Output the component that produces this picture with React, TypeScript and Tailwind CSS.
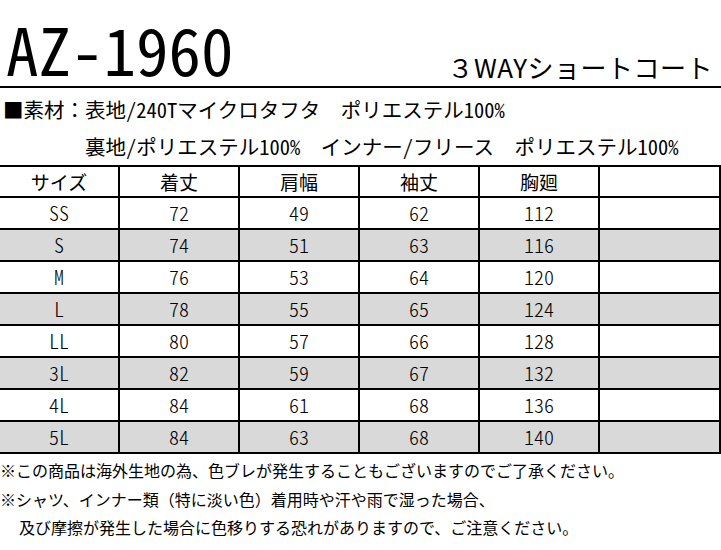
import React from "react";

const header = ["サイズ", "着丈", "肩幅", "袖丈", "胸廻", ""];
const rows: (string | number)[][] = [
  ["SS", 72, 49, 62, 112, ""],
  ["S", 74, 51, 63, 116, ""],
  ["M", 76, 53, 64, 120, ""],
  ["L", 78, 55, 65, 124, ""],
  ["LL", 80, 57, 66, 128, ""],
  ["3L", 82, 59, 67, 132, ""],
  ["4L", 84, 61, 68, 136, ""],
  ["5L", 84, 63, 68, 140, ""],
];

function T({ s }: { s: string }) {
  const parts = s.split(/([\x21-\x7e]+)/);
  return (
    <>
      {parts.map((p, i) =>
        /^[\x21-\x7e]+$/.test(p) ? (
          <span key={i} className="[font-feature-settings:'hwid']">
            {p}
          </span>
        ) : (
          <React.Fragment key={i}>{p}</React.Fragment>
        )
      )}
    </>
  );
}

export default function App() {
  return (
    <div className="w-[721px] h-[550px] bg-white text-black overflow-hidden font-['Noto_Sans_CJK_JP','Noto_Sans_CJK_SC',sans-serif]">
      <div className="flex items-end justify-between h-[88px] border-b-2 border-black">
        <span className="text-[65px] leading-none pl-[6px] mb-[5px] [font-feature-settings:'hwid']">AZ-1960</span>
        <span className="text-[26px] leading-none pr-[8px] mb-[6px] tracking-[0.5px]">３WAYショートコート</span>
      </div>
      <div className="pt-[2px] text-[20.5px] leading-none">
        <div className="h-[38px] flex items-center whitespace-pre pl-[3px]">
          <T s="■素材：表地/240Tマイクロタフタ　ポリエステル100%" />
        </div>
        <div className="h-[37px] flex items-center whitespace-pre pl-[3px]">
          <T s="　　　　裏地/ポリエステル100%　インナー/フリース　ポリエステル100%" />
        </div>
      </div>
      <div className="grid grid-cols-[120px_120px_120px_120px_120px_121px] border-t-2 border-black">
        {header.map((h, i) => (
          <div key={"h" + i} className="h-[31px] flex items-center justify-center border-r-2 border-b-2 border-black text-[19px] leading-none">
            {h}
          </div>
        ))}
        {rows.map((r, ri) =>
          r.map((c, ci) => (
            <div
              key={ri + "-" + ci}
              className={
                "h-[32px] flex items-center justify-center border-r-2 border-b-2 border-black text-[20px] leading-none font-light [font-feature-settings:'hwid'] " +
                (ri % 2 === 1 ? "bg-[#d9d9d9]" : "bg-white")
              }
            >
              {c}
            </div>
          ))
        )}
      </div>
      <div className="pt-[2px] text-[16px] leading-none">
        <div className="h-[28px] flex items-center whitespace-pre">※この商品は海外生地の為、色ブレが発生することもございますのでご了承ください。</div>
        <div className="h-[29px] flex items-center whitespace-pre">※シャツ、インナー類（特に淡い色）着用時や汗や雨で湿った場合、</div>
        <div className="h-[28px] flex items-center whitespace-pre pl-[3px]">　及び摩擦が発生した場合に色移りする恐れがありますので、ご注意ください。</div>
      </div>
    </div>
  );
}
